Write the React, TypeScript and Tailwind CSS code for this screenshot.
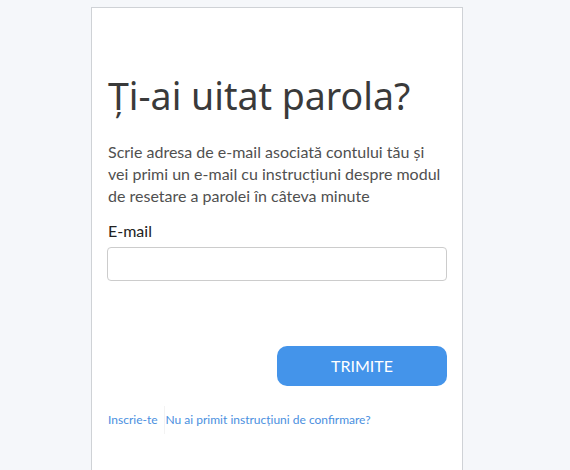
const ForgotPassword = () => {
  return (
    <div className="min-h-[470px] bg-[#f5f7fa] pl-[91px] pt-[7px]" style={{ fontFamily: 'Lato, "Noto Sans", sans-serif' }}>
      <div className="w-[372px] min-h-[470px] bg-white border border-[#cfd2d6] border-b-0 px-[15px] pt-[66px]">
        <h1 className="text-[37.5px] leading-[44px] text-[#3a3a3a] font-normal pl-px" style={{ fontFamily: '"Noto Sans", sans-serif' }}>
          Ți-ai uitat parola?
        </h1>
        <p className="mt-[23px] pl-px text-[16px] leading-[22px] text-[#505050]">
          Scrie adresa de e-mail asociată contului tău și vei primi un e-mail cu instrucțiuni despre modul de resetare a parolei în câteva minute
        </p>
        <label className="block mt-[13px] pl-px text-[16px] leading-[22px] text-[#222]">E-mail</label>
        <input type="email" className="block mt-[5px] w-[340px] h-[34px] border border-[#ccc] rounded-[4px] px-3 outline-none" />
        <div className="flex justify-end w-[340px] mt-[65px]">
          <button className="w-[170px] h-[40px] rounded-[10px] bg-[#4494ea] text-white text-[16px]">TRIMITE</button>
        </div>
        <div className="flex items-center mt-[20px] pl-px text-[12px] text-[#4a8fe0]">
          <a className="pr-[6px] py-[5px]">Inscrie-te</a>
          <a className="pl-[1px] py-[5px] border-l border-[#f3f3f3]">Nu ai primit instrucțiuni de confirmare?</a>
        </div>
      </div>
    </div>
  );
};

export default function App() {
  return <ForgotPassword />;
}
